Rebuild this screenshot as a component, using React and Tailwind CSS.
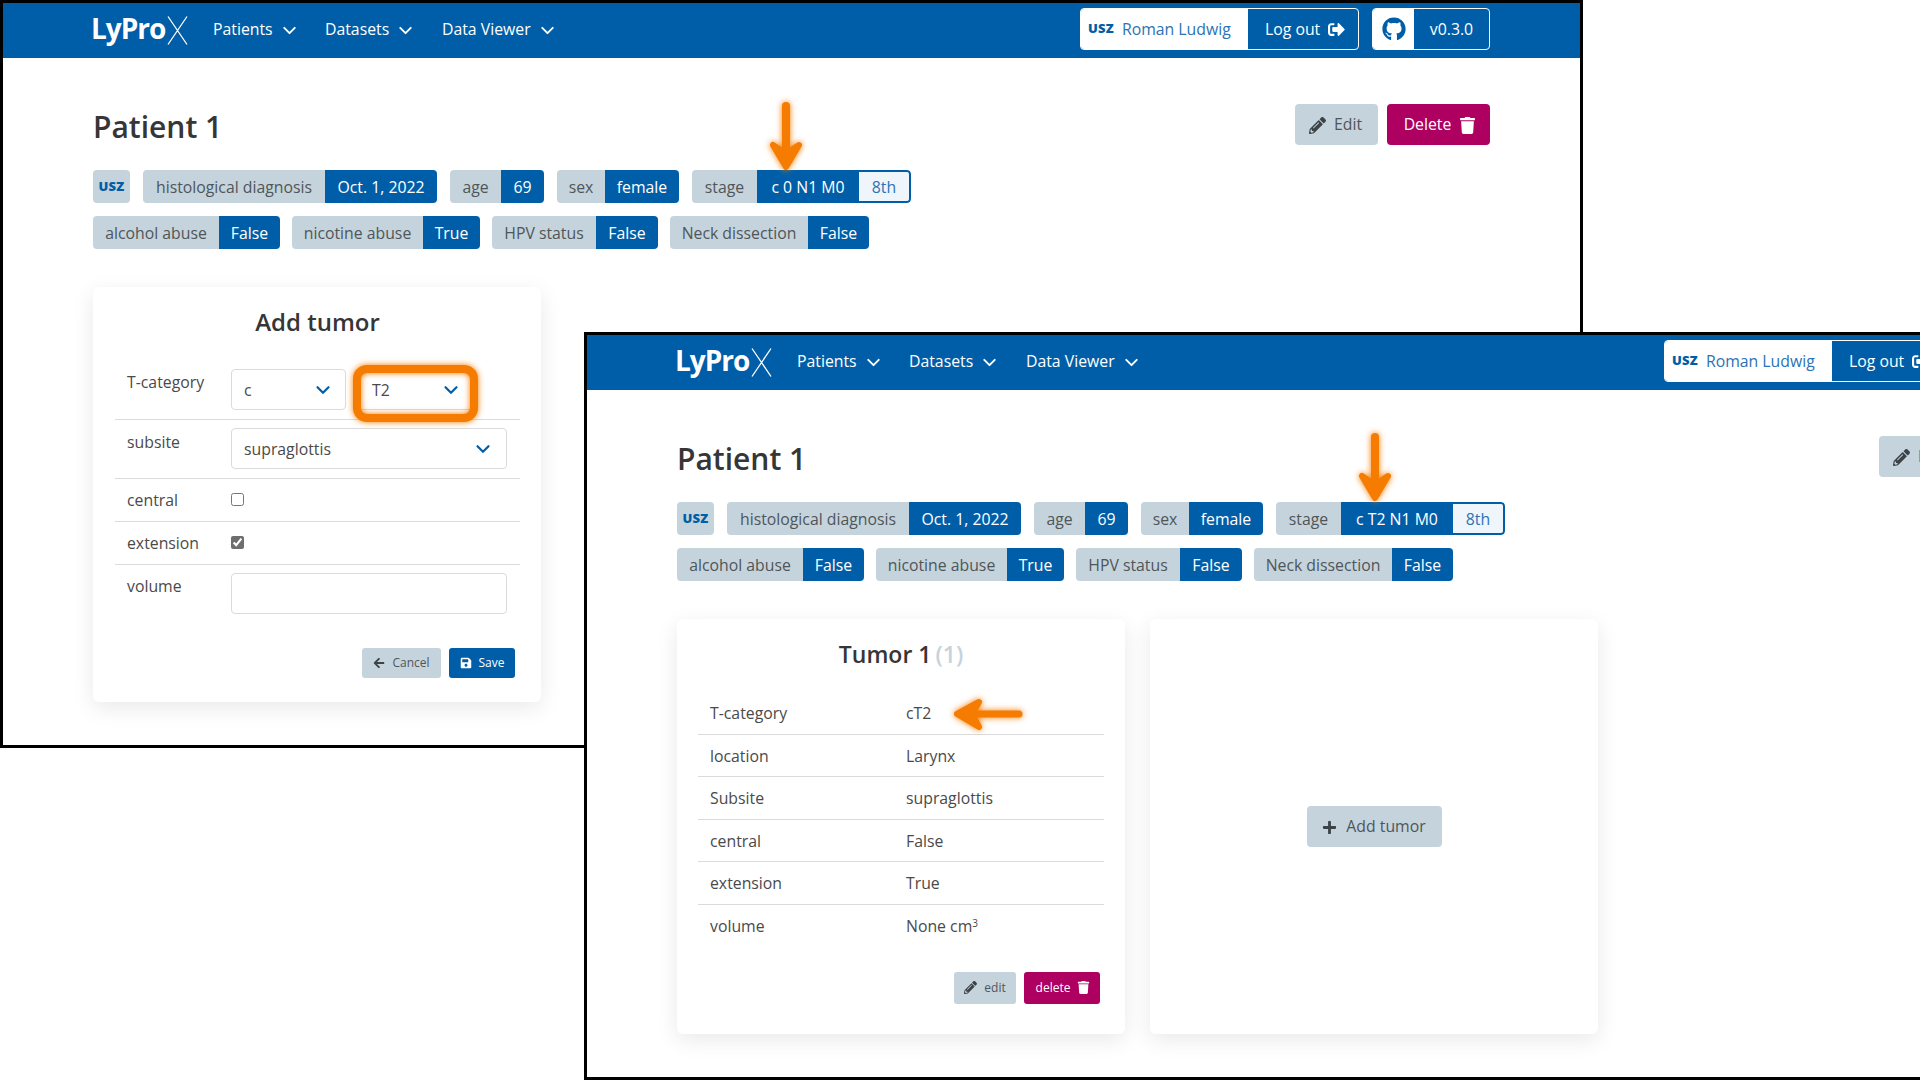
import { ChevronDown } from 'lucide-react'
import { FaPencilAlt, FaTrash, FaSignOutAlt, FaGithub, FaSave, FaArrowLeft, FaPlus } from 'react-icons/fa'

const row2 = [
  { label: 'alcohol abuse', value: 'False', lw: 'w-[126px]', vw: 'w-[61px]' },
  { label: 'nicotine abuse', value: 'True', lw: 'w-[131px]', vw: 'w-[57px]' },
  { label: 'HPV status', value: 'False', lw: 'w-[104px]', vw: 'w-[62px]' },
  { label: 'Neck dissection', value: 'False', lw: 'w-[138px]', vw: 'w-[61px]' },
]

function Tag({ label, value, lw, vw }) {
  return (
    <div className="flex h-[33px] items-center rounded-[4px] overflow-hidden text-center">
      <span className={`${lw} h-full leading-[34px] bg-[#c5d3dc] text-[#4f565a]`}>{label}</span>
      <span className={`${vw} h-full leading-[34px] bg-[#005ea8] text-white`}>{value}</span>
    </div>
  )
}

function Usz({ className }) {
  return <span className={`font-extrabold text-[13px] tracking-[0.2px] text-[#005ea8] ${className || ''}`}>USZ</span>
}

function Navbar() {
  return (
    <nav className="flex h-[55px] items-center justify-between bg-[#005ea8] px-[90px] text-white">
      <div className="flex items-center">
        {/* logo */}
        <div className="flex w-[120px] items-center -mt-[1px]">
          <span className="-ml-[2px] -mt-[5px] text-[28px] leading-none font-bold tracking-[-1px]">LyPro</span>
          <svg width="21" height="29" viewBox="0 0 21 29" className="ml-[2px] mt-[1px]" fill="none" stroke="white" strokeWidth="1.3">
            <path d="M1 0.5 L20 28.5 M20 0.5 L1 28.5" />
          </svg>
        </div>
        <NavItem label="Patients" width="w-[112px]" />
        <NavItem label="Datasets" width="w-[117px]" />
        <NavItem label="Data Viewer" />
      </div>
      <div className="-mt-[3px] flex items-center gap-[13px]">
        <div className="flex h-[42px] w-[279px] rounded-[4px] border border-white overflow-hidden">
          <div className="flex w-[167px] items-center bg-white pl-[7px]">
            <Usz className="mr-[8px]" />
            <span className="pt-[1px] text-[#2b73b5]">Roman Ludwig</span>
          </div>
          <div className="flex flex-1 items-center pl-[17px] pt-[1px]">
            Log out
            <FaSignOutAlt className="ml-[8px] text-[17px]" />
          </div>
        </div>
        <div className="flex h-[42px] w-[118px] rounded-[4px] border border-white overflow-hidden">
          <div className="flex w-[41px] items-center justify-center bg-white">
            <FaGithub className="text-[24px] text-[#005ea8]" />
          </div>
          <div className="flex flex-1 items-center justify-center pt-[1px]">v0.3.0</div>
        </div>
      </div>
    </nav>
  )
}

function NavItem({ label, width }) {
  return (
    <div className={`flex items-center gap-[8px] -mt-[1px] ${width || ''}`}>
      <span>{label}</span>
      <ChevronDown size={21} strokeWidth={2.2} className="-mx-[2px]" />
    </div>
  )
}

function Select({ value, className }) {
  return (
    <div className={`flex h-[41px] items-center justify-between rounded-[4px] border border-[#dbdbdb] bg-white text-[#4a4a4a] ${className}`}>
      <span className="pt-[2px]">{value}</span>
      <ChevronDown size={22} strokeWidth={2.4} className="text-[#005ea8]" />
    </div>
  )
}

function AddTumorForm() {
  return (
    <div className="flex h-[415px] w-[448px] flex-col rounded-md bg-white pl-[22px] pr-[21px] shadow-[0_6px_22px_rgba(0,0,0,0.09)]">
      <h3 className="flex h-[73px] items-start justify-center pt-[20px] text-[24px] leading-[30px] font-semibold text-[#363636]">Add tumor</h3>
      <div className="flex h-[60px] border-b border-[#dbdbdb] pt-[9px]">
        <span className="w-[116px] pl-[12px] pt-[2px]">T-category</span>
        <Select value="c" className="w-[115px] pl-[12px] pr-[11px]" />
        <div className="relative ml-[8px] w-[123px]">
          <Select value="T2" className="w-full pl-[17px] pr-[14px]" />
          <div className="absolute -left-[1px] -right-[1px] -top-[4px] -bottom-[3px] rounded-[14px] border-8 border-[#f57c00] drop-shadow-[0_0_3px_#f57c00]" />
        </div>
      </div>
      <div className="flex h-[59px] border-b border-[#dbdbdb] pt-[8px]">
        <span className="w-[116px] pl-[12px] pt-[3px]">subsite</span>
        <Select value="supraglottis" className="w-[276px] pl-[12px] pr-[12px]" />
      </div>
      <div className="flex h-[43px] border-b border-[#dbdbdb]">
        <span className="w-[116px] pl-[12px] pt-[10px]">central</span>
        <input type="checkbox" readOnly className="mt-[14px] h-[13px] w-[13px]" />
      </div>
      <div className="flex h-[43px] border-b border-[#dbdbdb]">
        <span className="w-[116px] pl-[12px] pt-[10px]">extension</span>
        <input type="checkbox" readOnly checked className="mt-[14px] h-[13px] w-[13px] accent-[#6e6e6e]" />
      </div>
      <div className="flex h-[49px] pt-[8px]">
        <span className="w-[116px] pl-[12px] pt-[2px]">volume</span>
        <div className="h-[41px] w-[276px] rounded-[4px] border border-[#dbdbdb] bg-white" />
      </div>
      <div className="mt-[34px] flex justify-end gap-[8px] pr-[5px] text-[12px]">
        <button className="flex h-[30px] w-[79px] items-center justify-center gap-[7px] rounded-[3px] bg-[#c5d3dc] text-[#4f565a]">
          <FaArrowLeft className="text-[12px] text-[#3c4246]" />
          Cancel
        </button>
        <button className="flex h-[30px] w-[66px] items-center justify-center gap-[7px] rounded-[3px] bg-[#005ea8] text-white">
          <FaSave className="text-[12px]" />
          Save
        </button>
      </div>
    </div>
  )
}

const tumorRows = [
  ['T-category', 'cT2'],
  ['location', 'Larynx'],
  ['Subsite', 'supraglottis'],
  ['central', 'False'],
  ['extension', 'True'],
]

function TumorCard() {
  return (
    <div className="flex h-[415px] w-[448px] flex-col rounded-md bg-white px-[21px] shadow-[0_6px_22px_rgba(0,0,0,0.09)]">
      <h3 className="flex h-[73px] items-start justify-center gap-[4px] pt-[20px] text-[23px] leading-[30px] font-semibold text-[#363636]">
        Tumor 1 <span className="text-[#c5d3dc]">(1)</span>
      </h3>
      {tumorRows.map(([k, v]) => (
        <div key={k} className="flex h-[42.6px] items-center border-b border-[#dbdbdb] pl-[12px] pt-[2px]">
          <span className="w-[196px]">{k}</span>
          <span>{v}</span>
        </div>
      ))}
      <div className="flex h-[42.6px] items-center pl-[12px] pt-[1px]">
        <span className="w-[196px]">volume</span>
        <span>None cm<sup className="text-[10px]">3</sup></span>
      </div>
      <div className="mt-[24px] flex justify-end gap-[8px] pr-[4px] text-[12px]">
        <button className="flex h-[32px] w-[62px] items-center justify-center gap-[7px] rounded-[3px] bg-[#c5d3dc] text-[#4f565a]">
          <FaPencilAlt className="text-[13px] text-[#3c4246]" />
          edit
        </button>
        <button className="flex h-[32px] w-[76px] items-center justify-center gap-[7px] rounded-[3px] bg-[#ad0060] pl-[2px] text-white">
          delete
          <FaTrash className="text-[13px]" />
        </button>
      </div>
    </div>
  )
}

function AddTumorCard() {
  return (
    <div className="flex h-[415px] w-[448px] items-center justify-center rounded-md bg-white shadow-[0_6px_22px_rgba(0,0,0,0.09)]">
      <button className="flex h-[41px] w-[135px] items-center justify-center gap-[9px] rounded-[4px] bg-[#c5d3dc] pt-[1px] text-[#4f565a]">
        <FaPlus className="text-[15px] text-[#3c4246]" />
        Add tumor
      </button>
    </div>
  )
}

function Win({ stage, stageWidth, className, children }) {
  return (
    <div className={`absolute h-[748px] w-[1583px] overflow-hidden border-[3px] border-black bg-white text-[#4a4a4a] ${className}`}>
      <Navbar />
      <div className="px-[90px]">
        <div className="mt-[46px] flex h-[41px] items-center justify-between">
          <h1 className="pt-[4px] text-[30px] font-semibold text-[#363636]">Patient 1</h1>
          <div className="flex gap-[9px]">
            <button className="flex h-[41px] w-[83px] items-center justify-center gap-[8px] rounded-[4px] bg-[#c5d3dc] pr-[2px] pt-[1px] text-[#4f565a]">
              <FaPencilAlt className="text-[17px] text-[#3c4246]" />
              Edit
            </button>
            <button className="flex h-[41px] w-[103px] items-center justify-center gap-[8px] rounded-[4px] bg-[#ad0060] pl-[3px] pt-[1px] text-white">
              Delete
              <FaTrash className="text-[17px]" />
            </button>
          </div>
        </div>
        <div className="mt-[25px] flex gap-[13px]">
          <div className="flex h-[33px] w-[37px] items-center justify-center rounded-[4px] bg-[#c5d3dc]">
            <Usz />
          </div>
          <Tag label="histological diagnosis" value="Oct. 1, 2022" lw="w-[182px]" vw="w-[112px]" />
          <Tag label="age" value="69" lw="w-[51px]" vw="w-[43px]" />
          <Tag label="sex" value="female" lw="w-[48px]" vw="w-[74px]" />
          <div className="flex h-[33px] items-center rounded-[4px] overflow-hidden text-center">
            <span className="h-full w-[65px] leading-[34px] bg-[#c5d3dc] text-[#4f565a]">stage</span>
            <span className={`h-full ${stageWidth} leading-[34px] bg-[#005ea8] text-white`}>{stage}</span>
            <span className="h-full w-[52px] rounded-r-[4px] border-2 border-l-0 border-[#005ea8] bg-[#eef6fc] leading-[30px] text-[#2b73b5]">8th</span>
          </div>
        </div>
        <div className="mt-[13px] flex gap-[12px]">
          {row2.map((t) => <Tag key={t.label} {...t} />)}
        </div>
        <div className="mt-[38px] flex gap-[25px]">{children}</div>
      </div>
    </div>
  )
}

function DownArrow({ className }) {
  return (
    <svg width="40" height="76" viewBox="0 0 40 76" fill="#f57c00" stroke="#f57c00" strokeLinecap="round" strokeLinejoin="round" className={`absolute drop-shadow-[0_0_3px_#f57c00] ${className}`}>
      <path d="M20 8 V55" strokeWidth="8" />
      <path d="M7 47 L20 69 L33 47 L20 56 Z" strokeWidth="6" />
    </svg>
  )
}

export default function App() {
  return (
    <div className="relative h-[1080px] w-[1920px] overflow-hidden bg-white text-[15.8px] font-['Open_Sans','Noto_Sans',sans-serif]">
      <Win stage="c 0 N1 M0" stageWidth="w-[102px]" className="left-0 top-0">
        <AddTumorForm />
      </Win>
      <Win stage="c T2 N1 M0" stageWidth="w-[112px]" className="left-[584px] top-[332px]">
        <TumorCard />
        <AddTumorCard />
      </Win>

      {/* annotation arrows */}
      <DownArrow className="left-[766px] top-[98px]" />
      <DownArrow className="left-[1355px] top-[429px]" />
      <svg width="80" height="40" viewBox="0 0 80 40" fill="#f57c00" stroke="#f57c00" strokeLinecap="round" strokeLinejoin="round" className="absolute left-[950px] top-[694px] drop-shadow-[0_0_3px_#f57c00]">
        <path d="M20 20 H69" strokeWidth="7" />
        <path d="M29 8 L7 20 L29 33 L22 20 Z" strokeWidth="6" />
      </svg>
    </div>
  )
}
